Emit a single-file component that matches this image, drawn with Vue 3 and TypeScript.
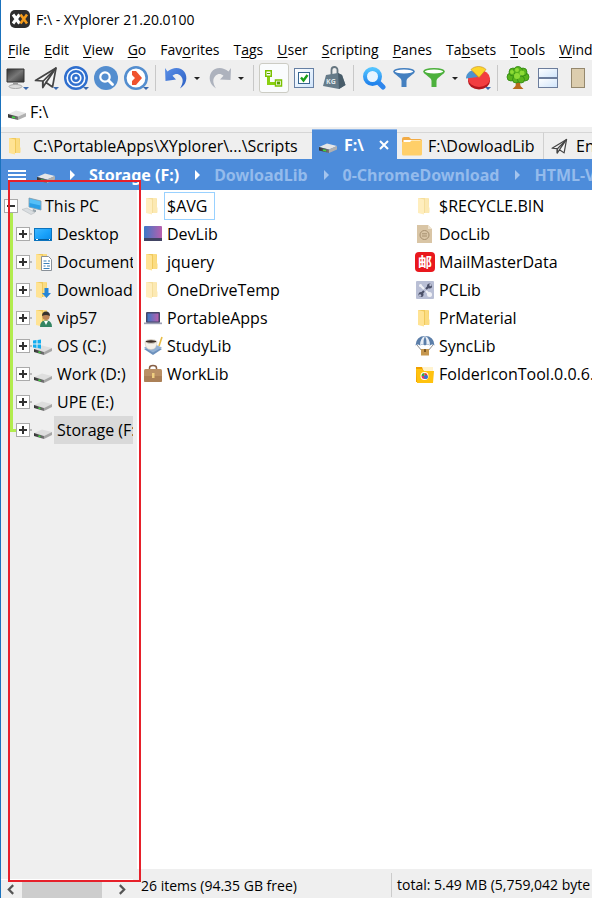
<script setup lang="ts">
import { ref } from 'vue'

interface MenuItem { pre: string; key: string; post: string }
interface Tool { kind: 'button' | 'sep' | 'caret'; icon?: string; label?: string; drop?: boolean; on?: boolean }
interface Entry { name: string; icon: string }

const menu: MenuItem[] = [
  { pre: '', key: 'F', post: 'ile' },
  { pre: '', key: 'E', post: 'dit' },
  { pre: '', key: 'V', post: 'iew' },
  { pre: '', key: 'G', post: 'o' },
  { pre: 'Fav', key: 'o', post: 'rites' },
  { pre: 'T', key: 'a', post: 'gs' },
  { pre: '', key: 'U', post: 'ser' },
  { pre: '', key: 'S', post: 'cripting' },
  { pre: '', key: 'P', post: 'anes' },
  { pre: 'Ta', key: 'b', post: 'sets' },
  { pre: '', key: 'T', post: 'ools' },
  { pre: '', key: 'W', post: 'indow' },
]

const tools: Tool[] = [
  { kind: 'button', icon: 'monitor', label: 'Computer', drop: true },
  { kind: 'button', icon: 'plane', label: 'Go to', drop: true },
  { kind: 'button', icon: 'target', label: 'Hotlist', drop: true },
  { kind: 'button', icon: 'find', label: 'Quick search' },
  { kind: 'button', icon: 'next', label: 'Recent locations', drop: true },
  { kind: 'sep' },
  { kind: 'button', icon: 'undo', label: 'Undo' },
  { kind: 'caret', label: 'Undo list' },
  { kind: 'button', icon: 'redo', label: 'Redo' },
  { kind: 'caret', label: 'Redo list' },
  { kind: 'sep' },
  { kind: 'button', icon: 'treeview', label: 'Mini tree', on: true },
  { kind: 'button', icon: 'check', label: 'Checkbox selection' },
  { kind: 'button', icon: 'weight', label: 'Show folder sizes' },
  { kind: 'sep' },
  { kind: 'button', icon: 'lens', label: 'Find files' },
  { kind: 'button', icon: 'funnel-blue', label: 'Visual filter' },
  { kind: 'button', icon: 'funnel-green', label: 'Live filter' },
  { kind: 'caret', label: 'Filter list' },
  { kind: 'button', icon: 'pie', label: 'Statistics', drop: true },
  { kind: 'sep' },
  { kind: 'button', icon: 'tree', label: 'Show tree' },
  { kind: 'button', icon: 'split', label: 'Dual pane' },
  { kind: 'button', icon: 'catalog', label: 'Show catalog' },
]

const crumbs = ['Storage (F:)', 'DowloadLib', '0-ChromeDownload', 'HTML-V']

const tree: Entry[] = [
  { name: 'Desktop', icon: 'desktop' },
  { name: 'Documents', icon: 'documents' },
  { name: 'Downloads', icon: 'downloads' },
  { name: 'vip57', icon: 'user' },
  { name: 'OS (C:)', icon: 'osdrive' },
  { name: 'Work (D:)', icon: 'harddisk' },
  { name: 'UPE (E:)', icon: 'harddisk' },
  { name: 'Storage (F:)', icon: 'harddisk' },
]
const current = ref('Storage (F:)')

const files: Entry[] = [
  { name: '$AVG', icon: 'folder-dim' },
  { name: 'DevLib', icon: 'devlib' },
  { name: 'jquery', icon: 'folder' },
  { name: 'OneDriveTemp', icon: 'folder-dim' },
  { name: 'PortableApps', icon: 'laptop' },
  { name: 'StudyLib', icon: 'study' },
  { name: 'WorkLib', icon: 'briefcase' },
  { name: '$RECYCLE.BIN', icon: 'folder-dim' },
  { name: 'DocLib', icon: 'doclib' },
  { name: 'MailMasterData', icon: 'mail' },
  { name: 'PCLib', icon: 'pclib' },
  { name: 'PrMaterial', icon: 'folder' },
  { name: 'SyncLib', icon: 'balloon' },
  { name: 'FolderIconTool.0.0.6.', icon: 'icontool' },
]
const focused = ref('$AVG')
const address = ref('F:\\')
</script>

<template>
  <svg class="sprite" aria-hidden="true">
    <defs>
      <linearGradient id="g-screen" x1="0" y1="0" x2="1" y2="1">
        <stop offset="0" stop-color="#333" /><stop offset=".5" stop-color="#777" /><stop offset="1" stop-color="#333" />
      </linearGradient>
      <linearGradient id="g-sky" x1="0" y1="0" x2="1" y2="1">
        <stop offset="0" stop-color="#43b8ff" /><stop offset=".5" stop-color="#1ba3fb" /><stop offset="1" stop-color="#0b8ae8" />
      </linearGradient>
      <linearGradient id="g-dev" x1="0" y1="0" x2="1" y2="0">
        <stop offset="0" stop-color="#3d78c6" /><stop offset="1" stop-color="#b95fae" />
      </linearGradient>
      <linearGradient id="g-pane" x1="0" y1="0" x2="1" y2="1">
        <stop offset="0" stop-color="#fff" /><stop offset="1" stop-color="#cfe4fb" />
      </linearGradient>
      <linearGradient id="g-drive" x1="0" y1="0" x2="1" y2="0">
        <stop offset="0" stop-color="#333" /><stop offset="1" stop-color="#777" />
      </linearGradient>
      <linearGradient id="g-undo" x1="0" y1="0" x2="1" y2="1">
        <stop offset="0" stop-color="#5b8fe6" /><stop offset="1" stop-color="#2b5fc4" />
      </linearGradient>
      <linearGradient id="g-lens" x1="0" y1="0" x2="0" y2="1">
        <stop offset="0" stop-color="#52c3ff" /><stop offset="1" stop-color="#2183ec" />
      </linearGradient>

      <symbol id="i-logo" viewBox="0 0 20 18">
        <rect width="20" height="18" rx="5" fill="#2d2d2d" />
        <path d="M3 4.500l6.500 9M9.500 4.500L3 13.500" stroke="#fff" stroke-width="3" />
        <path d="M10.500 4.500l6.500 9M17 4.500l-6.500 9" stroke="#f39b1c" stroke-width="2.600" fill="none" />
      </symbol>
      <symbol id="i-monitor" viewBox="0 0 24 24">
        <path d="M3 3h17v13H3z" fill="url(#g-screen)" stroke="#333" />
        <path d="M9 17h5v2H9z" fill="#999" />
        <ellipse cx="11.500" cy="20.500" rx="6.500" ry="2" fill="#ddd" stroke="#aaa" />
      </symbol>
      <symbol id="i-plane" viewBox="0 0 24 24">
        <path d="M1.500 14.500L22 2l-3.500 19-6.500-4.500-3.200 5V15z" fill="#f5f5f5" stroke="#444" stroke-width="1.700" stroke-linejoin="round" />
        <path d="M8.800 15.500L22 2 12 16.500M8.800 21v-5" fill="none" stroke="#444" stroke-width="1.700" />
      </symbol>
      <symbol id="i-target" viewBox="0 0 24 24">
        <circle cx="12" cy="12" r="10.800" fill="#f8fbff" stroke="#2f6fce" stroke-width="2.400" />
        <circle cx="12" cy="12" r="6.800" fill="none" stroke="#2f6fce" stroke-width="2.400" />
        <circle cx="12" cy="12" r="2.800" fill="none" stroke="#2f6fce" stroke-width="2.400" />
      </symbol>
      <symbol id="i-find" viewBox="0 0 24 24">
        <circle cx="12" cy="12" r="12" fill="#548ecf" />
        <circle cx="11" cy="11" r="4.700" fill="none" stroke="#fff" stroke-width="2.200" />
        <path d="M14.500 14.500l4 4" stroke="#fff" stroke-width="2.800" stroke-linecap="round" />
      </symbol>
      <symbol id="i-next" viewBox="0 0 24 24">
        <circle cx="12" cy="12" r="10.700" fill="#fff" stroke="#548ecf" stroke-width="2.600" />
        <path d="M8 5h4l6 7-6 7H8V15l3-3-3-3z" fill="#f0532f" />
      </symbol>
      <symbol id="i-undo" viewBox="0 0 24 24">
        <path d="M1 2l2.500 3.500C9 .5 17 .8 20.500 6c3.500 5.200 2 12.500-4.500 16.500 3.500-5.500 3.500-10 .5-12.800-2.500-2.300-5.500-2-8 0L12 13.500 1.500 15z" fill="url(#g-undo)" />
      </symbol>
      <symbol id="i-redo" viewBox="0 0 24 24">
        <path d="M23 2l-2.500 3.500C15 .5 7 .8 3.500 6 0 11.200 1.500 18.500 8 22.500 4.500 17 4.500 12.500 7.500 9.700c2.500-2.300 5.500-2 8 0L12 13.500 22.500 14z" fill="#adb2bd" />
      </symbol>
      <symbol id="i-treeview" viewBox="0 0 24 24">
        <path d="M5 10h3v6h6v3H5z" fill="#8ad012" />
        <rect x="3.750" y="4.750" width="5.500" height="5.500" fill="#fff" stroke="#7ac100" stroke-width="1.500" />
        <path d="M5 7.500h3" stroke="#5aa000" />
        <rect x="13.500" y="14" width="6" height="6" fill="#fff" stroke="#7ac100" stroke-width="1.500" />
        <rect x="15" y="15.500" width="3" height="3" fill="#5aa000" />
      </symbol>
      <symbol id="i-check" viewBox="0 0 24 24">
        <rect x="2.500" y="2.500" width="19" height="19" fill="url(#g-pane)" stroke="#6680a4" />
        <rect x="6.500" y="6.500" width="11" height="11" fill="#fff" stroke="#36658f" />
        <path d="M9 11.500l2.500 3L15.500 9" fill="none" stroke="#1aa01a" stroke-width="2.400" />
      </symbol>
      <symbol id="i-weight" viewBox="0 0 24 24">
        <path d="M9.500 9V4a3 3 0 0 1 6 0V9" fill="none" stroke="#667680" stroke-width="1.800" />
        <path d="M4 9l12-2 4 2 3.500 10-6.500 4-16-3z" fill="#667b89" />
        <path d="M16 7l4 2 3.500 10-6.500 4z" fill="#485c69" />
        <text x="4" y="18" class="kg">KG</text>
      </symbol>
      <symbol id="i-lens" viewBox="0 0 24 24">
        <path d="M16 16l5 5" stroke="#2f86ec" stroke-width="5" stroke-linecap="round" />
        <circle cx="10.500" cy="10.500" r="7.500" fill="#e9f5ff" stroke="url(#g-lens)" stroke-width="4" />
      </symbol>
      <symbol id="i-funnel-blue" viewBox="0 0 24 24">
        <path d="M1.500 5c0 4 8 6 8 10v6h5v-6c0-4 8-6 8-10z" fill="#4480c0" />
        <ellipse cx="12" cy="5.500" rx="10" ry="2.800" fill="#fff" stroke="#4480c0" stroke-width="1.500" />
      </symbol>
      <symbol id="i-funnel-green" viewBox="0 0 24 24">
        <path d="M1.500 5c0 4 8 6 8 10v6h5v-6c0-4 8-6 8-10z" fill="#4db13d" />
        <ellipse cx="12" cy="5.500" rx="10" ry="2.800" fill="#fff" stroke="#4db13d" stroke-width="1.500" />
      </symbol>
      <symbol id="i-pie" viewBox="0 0 24 24">
        <ellipse cx="13" cy="15" rx="11" ry="8.500" fill="#b3161d" />
        <ellipse cx="13" cy="12.500" rx="11" ry="8.500" fill="#f23c40" />
        <path d="M12 11L0 12.500c0-4 2.500-7 6-8z" fill="#4d93cf" />
        <path d="M13 11.500L5 3.500c4-4 11-4 15 0z" fill="#fcd62c" stroke="#c88c14" stroke-width=".6" />
      </symbol>
      <symbol id="i-tree" viewBox="0 0 24 24">
        <path d="M10.500 13h3l1 7 3 3h-11l3-3z" fill="#b86b1c" />
        <g fill="#58b31c" stroke="#2f8612" stroke-width=".8">
          <circle cx="5" cy="11" r="4" /><circle cx="19" cy="11" r="4" /><circle cx="10" cy="13.500" r="3.500" />
          <circle cx="15" cy="13.500" r="3.500" /><circle cx="7" cy="6" r="4" /><circle cx="17" cy="6" r="4" /><circle cx="12" cy="5" r="4.500" />
        </g>
        <g fill="#8ddb35"><circle cx="11" cy="4" r="2" /><circle cx="6" cy="6" r="2" /><circle cx="16" cy="7" r="2.500" /><circle cx="11" cy="10" r="3" /></g>
      </symbol>
      <symbol id="i-split" viewBox="0 0 24 24">
        <rect x="2.500" y="2.500" width="19" height="9" fill="url(#g-pane)" stroke="#6c7d9c" />
        <rect x="2.500" y="12.500" width="19" height="9" fill="url(#g-pane)" stroke="#6c7d9c" />
      </symbol>
      <symbol id="i-catalog" viewBox="0 0 24 24">
        <rect x="5.500" y="2.500" width="13" height="19" fill="#dccdae" stroke="#95886d" />
      </symbol>

      <symbol id="i-drive" viewBox="0 0 20 20">
        <path d="M1 12l8-3.500 10 2.500-8 3.500z" fill="#e6e6e6" />
        <path d="M1 12l10 2.500V18L1 15.500z" fill="url(#g-drive)" />
        <path d="M11 14.500l8-3.500v3.500L11 18z" fill="#b0b0b0" />
        <path d="M5 15l3 .8" stroke="#3ddb3d" stroke-width="1.500" />
      </symbol>
      <symbol id="i-harddisk" viewBox="0 0 20 20">
        <path d="M1 13l8-3.500L19 12l-8 4z" fill="#dedede" />
        <path d="M1 13l10 3v3L1 16z" fill="url(#g-drive)" />
        <path d="M11 16l8-4v3l-8 4z" fill="#a6a6a6" />
        <path d="M5.500 16l2 .6" stroke="#3ddb3d" stroke-width="1.500" />
      </symbol>
      <symbol id="i-osdrive" viewBox="0 0 20 20">
        <use href="#i-harddisk" />
        <path d="M0 4.500L3.500 4v3.500H0zM4.500 3.900L8 3.400v4.100H4.500zM0 8.500h3.500V12L0 11.500zM4.500 8.500H8v4.200l-3.500-.6z" fill="#12adef" />
      </symbol>
      <symbol id="i-folder" viewBox="0 0 20 20">
        <path d="M3 2h10l1 1v14H7z" fill="#f0c95c" />
        <path d="M10 2h3.500l.5 9 .5 1v4.500L13 17h-3z" fill="#fbdc82" />
        <path d="M3 2l6 1.500v15L3 17z" fill="#ffe394" />
      </symbol>
      <symbol id="i-folder-dim" viewBox="0 0 20 20"><use href="#i-folder" opacity=".6" /></symbol>
      <symbol id="i-folder-wide" viewBox="0 0 20 20">
        <path d="M0 3q0-2 2-2h5l2 2h9q2 0 2 2v4H0z" fill="#f2ab45" />
        <path d="M1.500 4h17v3h-17z" fill="#fff" />
        <path d="M0 6h8l1.500-1.500H20V18q0 1.500-1.500 1.500h-17Q0 19.500 0 18z" fill="#ffcf69" />
      </symbol>
      <symbol id="i-pc" viewBox="0 0 20 20">
        <path d="M7 2l12 3v9L7 11z" fill="#55bff7" stroke="#8297a6" stroke-width=".8" />
        <path d="M7.500 7L18.500 9.500v4L7.500 10.700z" fill="#2b9fe6" />
        <path d="M11 13l3 1v2l-4 .5z" fill="#9aa6ae" />
        <path d="M0 13.500l5-1.500 8 4.500-4 2z" fill="#d9dde0" stroke="#b7bcc0" stroke-width=".6" />
      </symbol>
      <symbol id="i-desktop" viewBox="0 0 20 20">
        <rect x="1.500" y="4.500" width="17" height="12" fill="url(#g-sky)" stroke="#0c73bd" />
        <path d="M2 15.500h16" stroke="#075e9d" /><path d="M3 15.500h2M16 15.500h1" stroke="#fff" />
      </symbol>
      <symbol id="i-documents" viewBox="0 0 20 20">
        <use href="#i-folder" />
        <path d="M8.500 4.500h7l3 3v11h-10z" fill="#fff" stroke="#899098" />
        <path d="M10.500 9h3M15 9h2M10.500 11.500h6M10.500 14h2M14 14h3M10.500 16.500h6" stroke="#3b81b8" />
      </symbol>
      <symbol id="i-downloads" viewBox="0 0 20 20">
        <use href="#i-folder" />
        <path d="M11.500 8h4v5H18l-4.500 5L9 13h2.500z" fill="#2586d8" />
      </symbol>
      <symbol id="i-user" viewBox="0 0 20 20">
        <use href="#i-folder" />
        <path d="M7 19q0-6 5-6.500h2q5 .5 5 6.500z" fill="#338563" />
        <circle cx="13" cy="8.500" r="3.600" fill="#bc8457" /><path d="M9 8q0-4.500 4-4.500T17 8q-4-2-8 0z" fill="#37322e" />
        <path d="M11 13h4l-2 4z" fill="#fff" />
      </symbol>
      <symbol id="i-devlib" viewBox="0 0 20 20">
        <rect x="1" y="2" width="18" height="15" rx="1" fill="url(#g-dev)" /><path d="M1 14h18v3H1z" fill="#414363" />
      </symbol>
      <symbol id="i-laptop" viewBox="0 0 20 20">
        <rect x="3" y="4" width="14" height="11" rx="1" fill="#44466c" /><path d="M4.500 5.500h11v8h-11z" fill="url(#g-dev)" />
        <path d="M1 14.500h18v1.700H1z" fill="#9c9fb4" />
      </symbol>
      <symbol id="i-study" viewBox="0 0 20 20">
        <path d="M1 13l9-4 9 4-9 6z" fill="#6d91bd" /><path d="M1 11.500l9-4 9 4-9 5z" fill="#93b1d4" />
        <path d="M2 5.500h12q0 8-6 8t-6-8z" fill="#f4f1ea" stroke="#c9c3b8" stroke-width=".5" /><ellipse cx="8" cy="5.500" rx="5.500" ry="1.800" fill="#3d3028" stroke="#ddd6ca" />
        <path d="M19 1l-3 9" stroke="#e8bd45" stroke-width="1.600" />
      </symbol>
      <symbol id="i-briefcase" viewBox="0 0 20 20">
        <path d="M6.500 6V4Q6.500 1.500 10 1.500T13.500 4v2" fill="none" stroke="#876046" stroke-width="1.500" />
        <rect x="1" y="5" width="18" height="13" rx="1.500" fill="#ba9065" /><path d="M1 12h18v4.500q0 1.500-1.500 1.500h-15Q1 18 1 16.500z" fill="#ab8057" />
        <rect x="9" y="9" width="2.500" height="5" fill="#efce80" />
      </symbol>
      <symbol id="i-doclib" viewBox="0 0 20 20">
        <path d="M2 1h11l4 4v14H2z" fill="#d9c5a5" /><path d="M13 1l4 4h-4z" fill="#eee2cc" />
        <circle cx="9.500" cy="11" r="4.500" fill="none" stroke="#a6906f" /><path d="M7 9.800h5M7 12h5" stroke="#a6906f" />
      </symbol>
      <symbol id="i-mail" viewBox="0 0 20 20"><rect width="20" height="20" rx="4" fill="#e9181d" /><text x="3" y="15" class="seal">邮</text></symbol>
      <symbol id="i-pclib" viewBox="0 0 20 20">
        <rect x="1" y="1" width="18" height="18" rx="1" fill="#b9bfd5" />
        <path d="M5 5l4 4M11 11l5 5" stroke="#f0f1f6" stroke-width="2.200" /><path d="M15 5l-4 4M9 11l-4 4" stroke="#4b5068" stroke-width="2.200" />
        <circle cx="5.500" cy="5.500" r="1.500" fill="#f0f1f6" /><circle cx="14.500" cy="14.500" r="2.500" fill="#f0f1f6" />
        <circle cx="14.500" cy="6" r="2.500" fill="#4b5068" /><circle cx="6" cy="14.500" r="2.500" fill="#4b5068" />
        <circle cx="15.500" cy="5" r="1.200" fill="#b9bfd5" /><circle cx="5" cy="15.500" r="1.200" fill="#b9bfd5" />
      </symbol>
      <symbol id="i-balloon" viewBox="0 0 20 20">
        <path d="M2 9l5 6M18 9l-5 6" stroke="#8f8f8f" />
        <path d="M.5 9.500Q1 0 10 0t9.500 9.500q-2.500-2-4.500 0-2.500-2-5 0-2.500-2-5 0-2-2-4.500 0z" fill="#5b7ea9" />
        <path d="M5 9.500Q5 2 10 0q-2 4-1.500 8.500-2-.7-3.500 1zM11.500 8.500Q12 4 10 0q5 2 5 9.500-1.500-1.700-3.500-1z" fill="#e9eff6" />
        <rect x="6" y="13" width="8" height="6.500" fill="#c6974f" /><path d="M10 13v3" stroke="#7c5926" stroke-width="2" />
      </symbol>
      <symbol id="i-icontool" viewBox="0 0 20 20">
        <path d="M1 3h7l2 2h8v13H1z" fill="#f0a000" /><path d="M7 3h11v5H9z" fill="#fff3cf" /><path d="M1 5h6l2 2h10l-1 12H2z" fill="#ffc20e" />
        <circle cx="9.500" cy="12" r="4" fill="#fff" /><path d="M6.500 12a3 3 0 0 1 3-3v3z" fill="#35a64a" /><path d="M9.500 9a3 3 0 0 1 3 3h-3z" fill="#e63934" /><path d="M6.500 12h6a3 3 0 0 1-6 0z" fill="#d83b6a" />
        <circle cx="11" cy="13" r="2" fill="#2f75d6" />
      </symbol>
    </defs>
  </svg>

  <div class="window">
    <header class="title">
      <svg class="logo"><use href="#i-logo" /></svg>
      <span>F:\ - XYplorer 21.20.0100</span>
    </header>

    <nav class="menu" aria-label="Main menu">
      <button v-for="m in menu" :key="m.pre + m.key + m.post" type="button">{{ m.pre }}<u>{{ m.key }}</u>{{ m.post }}</button>
    </nav>

    <div class="toolbar" role="toolbar" aria-label="Tools">
      <template v-for="(t, i) in tools" :key="i">
        <span v-if="t.kind === 'sep'" class="sep"></span>
        <button v-else-if="t.kind === 'caret'" type="button" class="caret" :aria-label="t.label"></button>
        <button v-else type="button" class="tool" :class="{ on: t.on }" :aria-label="t.label">
          <svg><use :href="'#i-' + t.icon" /></svg>
          <span v-if="t.drop" class="drop"></span>
        </button>
      </template>
    </div>

    <label class="address">
      <svg class="icon"><use href="#i-drive" /></svg>
      <input v-model="address" type="text" aria-label="Address" spellcheck="false" />
    </label>

    <div class="tabs" role="tablist">
      <button type="button" role="tab" class="tab first"><svg class="icon"><use href="#i-folder" /></svg>C:\PortableApps\XYplorer\...\Scripts</button>
      <div class="tab active">
        <button type="button" role="tab" aria-selected="true"><svg class="icon"><use href="#i-drive" /></svg>F:\</button>
        <button type="button" class="close" aria-label="Close tab">
          <svg viewBox="0 0 10 10"><path d="M1 1l8 8M9 1L1 9" stroke="#fff" stroke-width="2" /></svg>
        </button>
      </div>
      <button type="button" role="tab" class="tab third"><svg class="icon"><use href="#i-folder-wide" /></svg>F:\DowloadLib</button>
      <button type="button" role="tab" class="tab fourth"><svg class="icon small"><use href="#i-plane" /></svg>En</button>
    </div>

    <nav class="crumbs" aria-label="Breadcrumb">
      <button type="button" class="burger" aria-label="Menu"><i></i><i></i><i></i></button>
      <svg class="icon"><use href="#i-drive" /></svg>
      <template v-for="(c, i) in crumbs" :key="c">
        <span class="arrow" :class="{ dim: i > 1 }"></span>
        <a href="#" :class="{ dim: i > 0 }" @click.prevent>{{ c }}</a>
      </template>
    </nav>

    <div class="body">
      <aside class="side">
        <div class="tree">
          <div class="node root">
            <button type="button" class="toggle minus" aria-label="Collapse This PC"></button>
            <svg class="icon"><use href="#i-pc" /></svg>
            <button type="button" class="name">This PC</button>
          </div>
          <ul>
            <li v-for="n in tree" :key="n.name" class="node">
              <button type="button" class="toggle plus" :aria-label="'Expand ' + n.name"></button>
              <span class="link"></span>
              <svg class="icon"><use :href="'#i-' + n.icon" /></svg>
              <button type="button" class="name" :class="{ current: n.name === current }" @click="current = n.name">{{ n.name }}</button>
            </li>
          </ul>
        </div>
        <div class="scroll">
          <button type="button" aria-label="Scroll left"><svg viewBox="0 0 8 10"><path d="M6 1L2 5l4 4" /></svg></button>
          <span class="thumb"></span>
          <button type="button" aria-label="Scroll right"><svg viewBox="0 0 8 10"><path d="M2 1l4 4-4 4" /></svg></button>
        </div>
        <div class="outline"></div>
      </aside>

      <main class="pane">
        <ul class="files">
          <li v-for="f in files" :key="f.name">
            <svg class="icon"><use :href="'#i-' + f.icon" /></svg>
            <button type="button" class="file" :class="{ focused: f.name === focused }" @click="focused = f.name">{{ f.name }}</button>
          </li>
        </ul>
        <footer class="status">
          <span class="count">26 items (94.35 GB free)</span>
          <span class="total">total: 5.49 MB (5,759,042 byte</span>
        </footer>
      </main>
    </div>
  </div>
</template>

<style>
body { margin: 0; overflow: hidden; }
</style>

<style scoped>
.sprite { position: absolute; width: 0; height: 0; }
.kg { font: bold 7px "Open Sans", sans-serif; fill: #dfe6ea; }
.seal { font: bold 14px "Noto Sans CJK SC", sans-serif; fill: #fff; }
.window {
  display: flex; flex-direction: column; height: 100vh; box-sizing: border-box; overflow: hidden;
  border-left: 1px solid #1a72bd; background: #fff; color: #000;
  font-family: "Open Sans", "Noto Sans CJK SC", sans-serif; font-size: 16px; white-space: nowrap;
}
button, input { font: inherit; color: inherit; background: none; border: 0; padding: 0; margin: 0; white-space: nowrap; }
button { flex: none; }
ul { list-style: none; margin: 0; padding: 0; }
a { color: #fff; text-decoration: none; }
.icon { width: 20px; height: 20px; flex: none; }
.title { display: flex; align-items: center; gap: 6px; height: 38px; padding-left: 9px; font-size: 14px; flex: none; }
.logo { width: 20px; height: 18px; }
.menu { display: flex; align-items: center; gap: 14px; height: 22px; padding-left: 7px; font-size: 14px; flex: none; }
.menu u { text-underline-offset: 2px; }
.toolbar { display: flex; align-items: center; height: 36px; background: #efefef; flex: none; }
.tool { position: relative; display: flex; align-items: center; justify-content: center; box-sizing: border-box; width: 30px; height: 30px; border-radius: 3px; }
.tool svg { width: 24px; height: 24px; flex: none; }
.tool.on { background: #fafcfd; border: 1px solid #ccccc4; }
.drop { position: absolute; right: 2px; bottom: 3px; border: 3px solid transparent; border-top-color: #3a69ad; border-bottom: 0; }
.sep { flex: none; width: 1px; height: 26px; margin: 0 5px 0 4px; background: #c8c8c8; }
.caret { display: flex; width: 14px; height: 30px; align-items: center; padding-left: 3px; box-sizing: border-box; }
.caret::before { content: ""; border: 3px solid transparent; border-top-color: #222; border-bottom: 0; }
.address { display: flex; align-items: center; gap: 3px; height: 31px; padding-left: 6px; flex: none; }
.address input { flex: 1; min-width: 0; outline: 0; }
.tabs { display: flex; align-items: flex-end; height: 32px; background: #efefef; flex: none; }
.tab { display: flex; align-items: center; box-sizing: border-box; height: 27px; border-top: 1px solid #d6d6d6; }
.tab.first { width: 311px; padding-left: 5px; gap: 7px; }
.tab.active { width: 85px; height: 30px; flex: none; background: #4d8cda; color: #fff; font-weight: bold; border-color: #8fb6e8; padding: 0 8px 0 6px; justify-content: space-between; }
.tab.active button { display: flex; align-items: center; gap: 6px; }
.close svg { width: 10px; height: 10px; }
.tab.third { width: 147px; padding-left: 5px; gap: 6px; border-right: 1px solid #d0d0d0; }
.tab.fourth { flex: 1 0 auto; padding-left: 7px; gap: 8px; }
.icon.small { width: 17px; height: 17px; }
.crumbs { display: flex; align-items: center; height: 31px; padding-left: 7px; background: #4d8cda; font-family: "Noto Sans", sans-serif; font-weight: bold; flex: none; }
.crumbs .icon { margin: 0 -2px 0 10px; }
.burger { display: flex; flex-direction: column; gap: 2px; width: 18px; }
.burger i { height: 2px; background: #fff; }
.arrow { flex: none; margin: 0 14px 0 16px; border: 5px solid transparent; border-left-color: #fff; border-right: 0; }
.arrow.dim { border-left-color: #a3c4ee; }
.crumbs a.dim { color: #94bbec; }
.body { flex: 1; min-height: 0; display: flex; }
.side { position: relative; flex: none; width: 136px; display: flex; flex-direction: column; background: #efefef; }
.tree { flex: 1; margin-right: 4px; padding-top: 2px; overflow: hidden; border-bottom: 1px solid #fff; }
.node { display: flex; align-items: center; height: 28px; padding-left: 15px; }
.node.root { padding-left: 3px; }
.tree ul { position: relative; }
.tree ul::before { content: ""; position: absolute; left: 9px; top: -7px; bottom: 12px; width: 8px; box-sizing: border-box; border: solid #b2ec4f; border-width: 0 0 3px 3px; }
.toggle { position: relative; box-sizing: border-box; width: 14px; height: 14px; border: 1px solid #aaa; background: #fff; }
.toggle::before, .toggle.plus::after { content: ""; position: absolute; left: 2px; top: 5px; width: 8px; height: 2px; background: #333; }
.toggle.plus::after { left: 5px; top: 2px; width: 2px; height: 8px; }
.link { flex: none; width: 2px; height: 2px; background: #bbb; }
.node .icon { margin: 0 1px; }
.root .icon { margin: 0 1px 0 4px; }
.name { height: 28px; padding: 0 3px; }
.root .name { padding: 0 2px; }
.name.current { background: #d9d9d9; }
.scroll { display: flex; align-items: center; height: 18px; flex: none; margin-right: 4px; padding: 0 2px 0 4px; }
.scroll button { width: 12px; display: flex; justify-content: center; }
.scroll svg { width: 10px; height: 11px; fill: none; stroke: #555; stroke-width: 2; }
.thumb { flex: none; width: 80px; height: 18px; margin: 0 14px 0 5px; background: #cdcdcd; }
.outline { position: absolute; left: 7px; right: -4px; top: -10px; bottom: 16px; border: 2px solid #e6202a; pointer-events: none; box-sizing: border-box; }
.pane { flex: 1; min-width: 0; display: flex; flex-direction: column; overflow: hidden; }
.files { flex: 1; display: grid; grid-auto-flow: column; grid-template-rows: repeat(7, 28px); grid-auto-columns: 272px; padding: 2px 0 0 6px; }
.files li { display: flex; align-items: center; gap: 1px; }
.file { height: 28px; box-sizing: border-box; padding: 0 2px; border: 1px solid transparent; line-height: 24px; }
.file.focused { border-color: #99d1ff; padding-right: 7px; }
.status { display: flex; align-items: center; height: 29px; flex: none; background: #efefef; font-size: 14px; padding-top: 3px; box-sizing: border-box; }
.count { width: 250px; padding-left: 4px; flex: none; }
.total { border-left: 1px solid #ccc; padding-left: 5px; line-height: 24px; }
</style>
